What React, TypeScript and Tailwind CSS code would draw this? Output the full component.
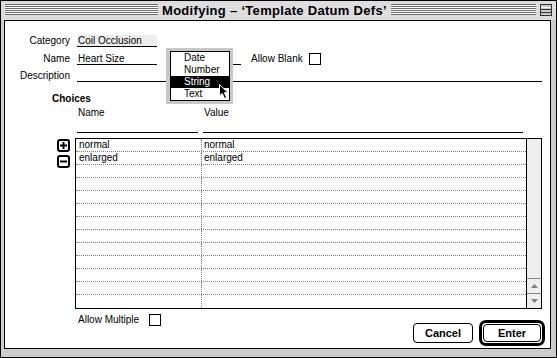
import React from 'react';

const choices: [string, string][] = [
  ['normal', 'normal'],
  ['enlarged', 'enlarged'],
  ['', ''], ['', ''], ['', ''], ['', ''], ['', ''], ['', ''],
  ['', ''], ['', ''], ['', ''], ['', ''], ['', ''],
];

const menuItems = ['Date', 'Number', 'String', 'Text'];

const stripes =
  'self-start mt-[3px] h-[11px] bg-[repeating-linear-gradient(to_bottom,#6e6e6e_0px,#6e6e6e_1px,#ffffff_1px,#ffffff_2px)]';

function Checkbox() {
  return <div className="w-[12px] h-[12px] border border-black bg-white" />;
}

function PlusMinus({ plus }: { plus: boolean }) {
  return (
    <svg width="13" height="13" viewBox="0 0 13 13">
      <rect x="1" y="1" width="11" height="11" rx="2" fill="white" stroke="black" strokeWidth="2" />
      <line x1="3" y1="6.5" x2="10" y2="6.5" stroke="black" strokeWidth="2" />
      {plus && <line x1="6.5" y1="3" x2="6.5" y2="10" stroke="black" strokeWidth="2" />}
    </svg>
  );
}

export default function App() {
  return (
    <div className="w-[557px] h-[358px] border border-black bg-[#cccccc] flex flex-col font-['Liberation_Sans',Arial,sans-serif] text-black">
      {/* title bar */}
      <div className="h-[19px] bg-[#dddddd] flex pl-[4px] pr-[4px]">
        <div className={`w-[153px] ${stripes}`} />
        <div className="mx-[4px] text-[13px] font-bold leading-[19px] tracking-[0.3px] whitespace-nowrap">
          Modifying – ‘Template Datum Defs’
        </div>
        <div className={`flex-1 ${stripes}`} />
        <svg width="12" height="12" viewBox="0 0 12 12" className="ml-[4px] mt-[3px]">
          <rect x="0.5" y="0.5" width="11" height="11" fill="#c8c8c8" stroke="#333" />
          <line x1="1" y1="3.5" x2="11" y2="3.5" stroke="#fff" />
          <line x1="1" y1="5.5" x2="11" y2="5.5" stroke="#333" />
          <line x1="1" y1="8.5" x2="11" y2="8.5" stroke="#333" />
        </svg>
      </div>

      {/* content */}
      <div className="relative flex-1 ml-[3px] mr-[5px] mb-[8px] border border-black bg-white flex flex-col text-[10px] leading-[11px]">
        {/* Category */}
        <div className="flex items-end mt-[14px]">
          <div className="w-[65px] h-[12px] text-right border-b border-transparent">Category</div>
          <div className="ml-[7px] w-[80px] h-[12px] bg-[#eeeeee] border-b border-black pl-[1px]">Coil Occlusion</div>
        </div>

        {/* Name */}
        <div className="flex items-end mt-[6px]">
          <div className="w-[65px] h-[12px] text-right border-b border-transparent">Name</div>
          <div className="ml-[7px] w-[80px] h-[12px] border-b border-black pl-[1px]">Heart Size</div>
          <div className="ml-[13px] w-[71px] h-[12px] border-b border-black" />
          <div className="ml-[10px] w-[58px] h-[12px] border-b border-transparent">Allow Blank</div>
          <Checkbox />
        </div>

        {/* Description */}
        <div className="flex items-end mt-[5px]">
          <div className="w-[65px] h-[12px] text-right border-b border-transparent">Description</div>
          <div className="ml-[7px] mr-[8px] flex-1 h-[12px] border-b border-black" />
        </div>

        <div className="mt-[11px] ml-[47px] font-bold leading-[12px]">Choices</div>

        <div className="flex mt-[2px] leading-[12px]">
          <div className="ml-[73px] w-[126px]">Name</div>
          <div>Value</div>
        </div>

        <div className="flex mt-[13px]">
          <div className="ml-[72px] w-[121px] h-[1px] bg-black" />
          <div className="ml-[5px] w-[320px] h-[1px] bg-black" />
        </div>

        {/* table */}
        <div className="flex mt-[5px]">
          <div className="ml-[52px] w-[13px] flex flex-col">
            <div className="mt-[1px]"><PlusMinus plus /></div>
            <div className="mt-[3px]"><PlusMinus plus={false} /></div>
          </div>
          <div className="ml-[5px] w-[467px] h-[171px] border border-black flex">
            <div className="w-[450px] flex flex-col">
              {choices.map((c, i) => (
                <div
                  key={i}
                  className={i < choices.length - 1 ? 'flex h-[13px] border-b border-dotted border-[#808080]' : 'flex h-[13px]'}
                >
                  <div className="w-[126px] pl-[3px] border-r border-dotted border-[#808080] leading-[12px]">{c[0]}</div>
                  <div className="flex-1 pl-[2px] leading-[12px]">{c[1]}</div>
                </div>
              ))}
            </div>
            <div className="w-[15px] border-l border-black bg-[#eeeeee] flex flex-col">
              <div className="flex-1" />
              <div className="h-[15px] border-t border-[#888888] flex items-center justify-center">
                <svg width="7" height="4" viewBox="0 0 7 4"><path d="M3.5 0 L7 4 L0 4 Z" fill="#808080" /></svg>
              </div>
              <div className="h-[15px] border-t border-[#888888] flex items-center justify-center">
                <svg width="7" height="4" viewBox="0 0 7 4"><path d="M0 0 L7 0 L3.5 4 Z" fill="#808080" /></svg>
              </div>
            </div>
          </div>
        </div>

        {/* bottom row */}
        <div className="flex items-start">
          <div className="flex items-center mt-[5px] ml-[73px]">
            <div className="w-[71px] leading-[12px]">Allow Multiple</div>
            <Checkbox />
          </div>
          <div className="ml-auto mt-[14px] w-[60px] h-[20px] border border-black rounded-[4px] flex items-center justify-center text-[11px] font-bold">
            Cancel
          </div>
          <div className="ml-[6px] mr-[5px] mt-[11px] w-[66px] h-[26px] border-[3px] border-black rounded-[7px] p-[1px]">
            <div className="h-full border border-black rounded-[4px] flex items-center justify-center text-[11px] font-bold">
              Enter
            </div>
          </div>
        </div>

        {/* open popup menu */}
        <div className="absolute left-[161px] top-[27px] w-[67px] h-[56px] bg-[#c8c8c8]">
          <div className="ml-[4px] mt-[3px] w-[60px] h-[50px] border border-black bg-white flex flex-col">
            {menuItems.map((m) => (
              <div
                key={m}
                className={m === 'String' ? 'h-[12px] leading-[12px] pl-[13px] bg-black text-white' : 'h-[12px] leading-[12px] pl-[13px]'}
              >
                {m}
              </div>
            ))}
          </div>
        </div>

        {/* mouse pointer */}
        <svg width="12" height="17" viewBox="0 0 12 17" className="absolute left-[213px] top-[62px]">
          <path d="M1.5 1.5 L1.5 13 L4.2 10.4 L6.5 15.5 L8.6 14.6 L6.4 9.7 L10.2 9.7 Z" fill="black" stroke="white" strokeWidth="1" />
        </svg>
      </div>
    </div>
  );
}
